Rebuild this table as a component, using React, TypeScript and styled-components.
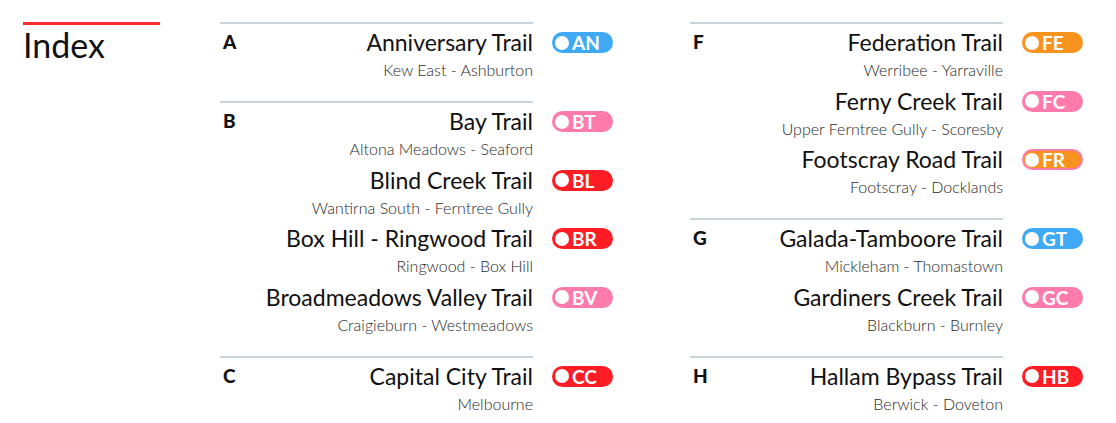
import React from 'react';
import styled, { createGlobalStyle } from 'styled-components';

type Tone = 'blue' | 'pink' | 'red' | 'orange' | 'orangePink';

interface Trail {
  code: string;
  name: string;
  route: string;
  tone: Tone;
}

interface Group {
  letter: string;
  trails: Trail[];
}

const TONES: Record<Tone, { fill: string; edge: string }> = {
  blue: { fill: '#3fa9f5', edge: '#3fa9f5' },
  pink: { fill: '#ff7bac', edge: '#ff7bac' },
  red: { fill: '#ff1d25', edge: '#ff1d25' },
  orange: { fill: '#f7931e', edge: '#f7931e' },
  orangePink: { fill: '#f7931e', edge: '#ff7bac' },
};

const LEFT: Group[] = [
  { letter: 'A', trails: [{ code: 'AN', name: 'Anniversary Trail', route: 'Kew East - Ashburton', tone: 'blue' }] },
  {
    letter: 'B',
    trails: [
      { code: 'BT', name: 'Bay Trail', route: 'Altona Meadows - Seaford', tone: 'pink' },
      { code: 'BL', name: 'Blind Creek Trail', route: 'Wantirna South - Ferntree Gully', tone: 'red' },
      { code: 'BR', name: 'Box Hill - Ringwood Trail', route: 'Ringwood - Box Hill', tone: 'red' },
      { code: 'BV', name: 'Broadmeadows Valley Trail', route: 'Craigieburn - Westmeadows', tone: 'pink' },
    ],
  },
  { letter: 'C', trails: [{ code: 'CC', name: 'Capital City Trail', route: 'Melbourne', tone: 'red' }] },
];

const RIGHT: Group[] = [
  {
    letter: 'F',
    trails: [
      { code: 'FE', name: 'Federation Trail', route: 'Werribee - Yarraville', tone: 'orange' },
      { code: 'FC', name: 'Ferny Creek Trail', route: 'Upper Ferntree Gully - Scoresby', tone: 'pink' },
      { code: 'FR', name: 'Footscray Road Trail', route: 'Footscray - Docklands', tone: 'orangePink' },
    ],
  },
  {
    letter: 'G',
    trails: [
      { code: 'GT', name: 'Galada-Tamboore Trail', route: 'Mickleham - Thomastown', tone: 'blue' },
      { code: 'GC', name: 'Gardiners Creek Trail', route: 'Blackburn - Burnley', tone: 'pink' },
    ],
  },
  { letter: 'H', trails: [{ code: 'HB', name: 'Hallam Bypass Trail', route: 'Berwick - Doveton', tone: 'red' }] },
];

const GlobalStyle = createGlobalStyle`
  html, body { margin: 0; padding: 0; background: #fff; }
  body { font-family: Lato, "Open Sans", sans-serif; color: #111; }
`;

const Page = styled.div`
  display: flex;
  padding: 22px 0 0 23px;
`;

const Sidebar = styled.div`
  width: 197px;
  flex-shrink: 0;
`;

const TitleRule = styled.div`
  width: 137px;
  height: 3px;
  background: #ff2a2f;
`;

const Title = styled.h1`
  margin: 2px 0 0 0;
  font-size: 34px;
  font-weight: 400;
  line-height: 36px;
  color: #111;
`;

const Columns = styled.div`
  display: flex;
  gap: 77px;
`;

const Column = styled.div`
  display: flex;
  flex-direction: column;
  width: 393px;
`;

const GroupBlock = styled.section`
  display: grid;
  grid-template-columns: 28px 285px;
  width: 313px;
  border-top: 2px solid #c9d4dd;
  padding: 3px 0 15.5px;
`;

const Letter = styled.div`
  padding: 3px 0 0 3px;
  font-size: 19px;
  font-weight: 900;
  line-height: 24px;
`;

const Entries = styled.div`
  display: flex;
  flex-direction: column;
`;

const Entry = styled.div`
  position: relative;
  height: 58.5px;
  text-align: right;
  white-space: nowrap;
`;

const Name = styled.div`
  font-size: 23px;
  line-height: 30px;
  color: #111;
`;

const Route = styled.div`
  margin-top: 2px;
  font-size: 16px;
  font-weight: 300;
  line-height: 22px;
  color: #2a2a2a;
`;

const Badge = styled.div<{ $tone: Tone }>`
  position: absolute;
  left: 304px;
  top: 5px;
  box-sizing: border-box;
  width: 61px;
  height: 21px;
  border-radius: 11px;
  background: ${(p) => TONES[p.$tone].fill};
  border: 2px solid ${(p) => TONES[p.$tone].edge};
  display: flex;
  align-items: center;
  padding-left: 1px;
  gap: 3px;
  color: #fff;
  font-size: 19px;
  font-weight: 700;
  line-height: 1;
  text-align: left;
`;

const Dot = styled.span`
  width: 14px;
  height: 14px;
  border-radius: 50%;
  background: #fff;
  flex-shrink: 0;
`;

const TrailGroup: React.FC<{ group: Group }> = ({ group }) => (
  <GroupBlock>
    <Letter>{group.letter}</Letter>
    <Entries>
      {group.trails.map((t) => (
        <Entry key={t.code}>
          <Name>{t.name}</Name>
          <Route>{t.route}</Route>
          <Badge $tone={t.tone}>
            <Dot />
            {t.code}
          </Badge>
        </Entry>
      ))}
    </Entries>
  </GroupBlock>
);

export default function App() {
  return (
    <>
      <GlobalStyle />
      <Page>
        <Sidebar>
          <TitleRule />
          <Title>Index</Title>
        </Sidebar>
        <Columns>
          <Column>
            {LEFT.map((g) => (
              <TrailGroup key={g.letter} group={g} />
            ))}
          </Column>
          <Column>
            {RIGHT.map((g) => (
              <TrailGroup key={g.letter} group={g} />
            ))}
          </Column>
        </Columns>
      </Page>
    </>
  );
}
